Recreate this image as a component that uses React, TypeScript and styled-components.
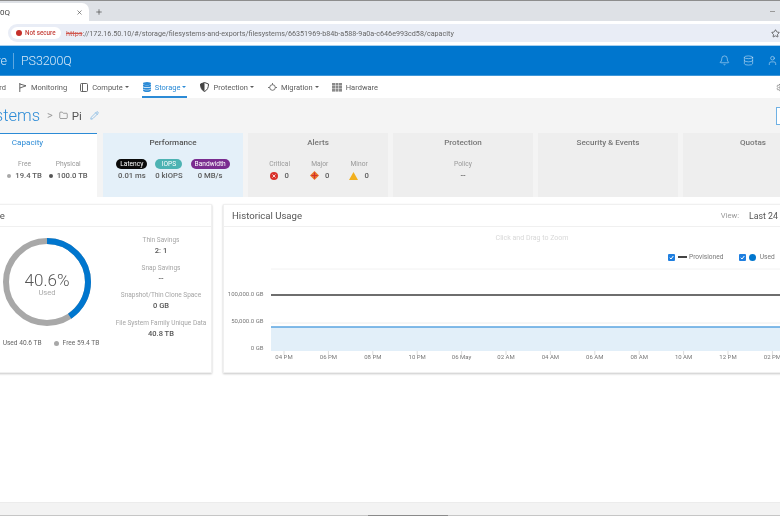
import React from "react";
import styled, { createGlobalStyle } from "styled-components";
import { Bell, Database, Folder, Pencil, Settings, Star, User, X, Plus } from "lucide-react";

const Global = createGlobalStyle`
  html, body { margin: 0; padding: 0; background: #fff; }
  * { box-sizing: border-box; }
`;

const Page = styled.div`
  width: 780px;
  height: 516px;
  overflow: hidden;
  display: flex;
  flex-direction: column;
  font-family: Roboto, "Liberation Sans", sans-serif;
  color: #555;
  background: #fff;
  position: relative;
  filter: blur(0.3px);
`;

const TabStrip = styled.div`
  height: 21px;
  flex: none;
  background: #dee1e6;
  border-top: 1px solid #8d8d8d;
  display: flex;
  align-items: flex-end;
  color: #444;
`;

const Tab = styled.div`
  width: 89px;
  height: 18px;
  background: #fff;
  border-radius: 0 7px 0 0;
  display: flex;
  align-items: center;
  justify-content: space-between;
  padding-right: 6px;
  font-size: 8px;
`;

const NewTab = styled.div`
  width: 20px;
  height: 18px;
  display: flex;
  align-items: center;
  justify-content: center;
`;

const WindowDash = styled.div`
  width: 5px;
  height: 1px;
  background: #999;
  margin: 0 5px 9px auto;
`;

const Toolbar = styled.div`
  height: 25px;
  flex: none;
  background: #fff;
  padding: 3px 0 3px 8px;
  display: flex;
  align-items: flex-start;
  border-bottom: 1px solid #a9d0ee;
`;

const AddressBar = styled.div`
  width: 772px;
  height: 18px;
  background: #e9edf6;
  border-radius: 9px 0 0 9px;
  padding-left: 3px;
  display: flex;
  align-items: center;
  white-space: nowrap;
  font-size: 7.2px;
  color: #666;
`;

const SecureChip = styled.div`
  width: 50px;
  height: 12px;
  background: #fff;
  border-radius: 6px;
  display: flex;
  align-items: center;
  gap: 3px;
  padding-left: 5px;
  margin-right: 5px;
  color: #c5403a;
  font-size: 6.3px;
  font-weight: 500;
`;

const WarnDot = styled.span`
  width: 6px;
  height: 6px;
  border-radius: 50%;
  background: #c5302a;
  flex: none;
`;

const Https = styled.span`
  color: #d0584f;
  text-decoration: line-through;
`;

const StarSlot = styled.span`
  margin-left: auto;
  display: flex;
  color: #444;
`;

const Brand = styled.header`
  height: 30px;
  flex: none;
  background: #0076ce;
  display: flex;
  align-items: center;
  color: #d7e9f7;
  border-bottom: 1px solid #3f97d9;
`;

const BrandName = styled.div`
  font-size: 12.5px;
  font-weight: 300;
  width: 13px;
  text-align: right;
  padding-right: 6px;
  white-space: nowrap;
  direction: rtl;
`;

const ModelName = styled.div`
  border-left: 1px solid #5ea8e0;
  padding-left: 7px;
  height: 16px;
  line-height: 16px;
  font-size: 12.5px;
  font-weight: 300;
  letter-spacing: -0.1px;
`;

const BrandIcons = styled.div`
  margin-left: auto;
  display: flex;
  gap: 13px;
  margin-right: 2px;
`;

const NavBar = styled.nav`
  height: 22px;
  flex: none;
  background: #fff;
  display: flex;
  align-items: stretch;
  font-size: 7.5px;
  color: #5c5c5c;
`;

const NavItem = styled.div<{ $active?: boolean; $gap: number }>`
  display: flex;
  align-items: center;
  gap: 4px;
  margin-right: ${(p) => p.$gap}px;
  color: ${(p) => (p.$active ? "#2c8bd6" : "#5c5c5c")};
  border-bottom: 2px solid ${(p) => (p.$active ? "#2c8bd6" : "transparent")};
  padding: 2px 1px 0;
  white-space: nowrap;
`;

const NavLeadin = styled.div`
  width: 6px;
  direction: rtl;
  overflow: hidden;
  margin-right: 12px;
  display: flex;
  align-items: center;
  white-space: nowrap;
`;

const Caret = styled.span`
  width: 0;
  height: 0;
  border-left: 2px solid transparent;
  border-right: 2px solid transparent;
  border-top: 2.5px solid currentColor;
  margin-left: -2px;
`;

const NavEnd = styled.div`
  margin-left: auto;
  display: flex;
  align-items: center;
  margin-right: -5px;
  color: #777;
`;

const Content = styled.main`
  flex: 1;
  min-height: 0;
  background: linear-gradient(#f4f4f4 0, #f4f4f4 99px, #fff 99px);
`;

const TitleRow = styled.div`
  height: 35px;
  display: flex;
  align-items: center;
  margin-left: -58px;
  color: #555;
  position: relative;
`;

const Crumb = styled.div`
  font-size: 16.5px;
  font-weight: 300;
  color: #2c8bd6;
  width: 98px;
  text-align: right;
  white-space: nowrap;
`;

const Chevron = styled.span`
  font-size: 11px;
  color: #999;
  margin: 0 6px 0 7px;
`;

const CurrentName = styled.span`
  font-size: 11.5px;
  margin: 0 8px 0 4px;
`;

const CornerButton = styled.div`
  position: absolute;
  left: 834px;
  top: 9px;
  width: 30px;
  height: 18px;
  background: #fff;
  border: 1px solid #6fb1e4;
`;

const TileRow = styled.div`
  display: flex;
  gap: 5px;
  margin-left: -42px;
  height: 64px;
`;

const Tile = styled.section<{ $tone?: "active" | "info" }>`
  width: ${(p) => (p.$tone === "active" ? 139 : 140)}px;
  flex: none;
  margin-right: ${(p) => (p.$tone === "active" ? 1 : 0)}px;
  background: ${(p) => (p.$tone === "active" ? "#fff" : p.$tone === "info" ? "#e4f0f9" : "#eee")};
  border-top: 1px solid ${(p) => (p.$tone === "active" ? "#2c8bd6" : "transparent")};
  display: flex;
  flex-direction: column;
  align-items: center;
`;

const TileTitle = styled.div<{ $active?: boolean; $muted?: boolean }>`
  font-size: 8.1px;
  line-height: 10px;
  margin: 3px 0 12px;
  color: ${(p) => (p.$active ? "#2c8bd6" : p.$muted ? "#777" : "#555")};
  font-weight: ${(p) => (p.$active ? 400 : 500)};
`;

const Metrics = styled.div<{ $gap: number; $shift?: number }>`
  display: flex;
  gap: ${(p) => p.$gap}px;
  margin-left: ${(p) => p.$shift ?? 0}px;
`;

const Metric = styled.div`
  display: flex;
  flex-direction: column;
  align-items: center;
  gap: 1px;
  font-size: 7.7px;
  color: #555;
  white-space: nowrap;
`;

const MetricLabel = styled.div`
  font-size: 6.7px;
  line-height: 10px;
  height: 10px;
  color: #999;
`;

const MetricValue = styled.div<{ $gap?: number }>`
  display: flex;
  align-items: center;
  gap: ${(p) => p.$gap ?? 4}px;
  line-height: 11px;
  font-weight: 500;
  color: #5c5c5c;
`;

const Dot = styled.span<{ $color: string; $size?: number }>`
  width: ${(p) => p.$size ?? 4}px;
  height: ${(p) => p.$size ?? 4}px;
  border-radius: 50%;
  background: ${(p) => p.$color};
  flex: none;
`;

const Pill = styled.div<{ $color: string; $width: number }>`
  width: ${(p) => p.$width}px;
  height: 10px;
  line-height: 10px;
  border-radius: 5px;
  background: ${(p) => p.$color};
  color: #fff;
  font-size: 6.6px;
  text-align: center;
`;

const PanelRow = styled.div`
  display: flex;
  gap: 11px;
  margin: 7px 0 0 -43px;
`;

const Panel = styled.section<{ $width: number }>`
  width: ${(p) => p.$width}px;
  height: 169px;
  flex: none;
  background: #fff;
  border: 1px solid #f0f0f0;
  box-shadow: 0 1px 2px rgba(0, 0, 0, 0.22);
  display: flex;
  flex-direction: column;
`;

const PanelHead = styled.div<{ $inset?: number }>`
  height: 22px;
  flex: none;
  border-bottom: 1px solid #f0f0f0;
  display: flex;
  align-items: center;
  padding: 0 8px 0 ${(p) => p.$inset ?? 8}px;
  font-size: 9.6px;
  color: #555;
`;

const ViewLabel = styled.span`
  margin-left: auto;
  font-size: 7.6px;
  color: #999;
`;

const ViewValue = styled.span`
  margin-left: 10px;
  width: 85px;
  font-size: 8.8px;
  color: #555;
  white-space: nowrap;
`;

const UsageBody = styled.div`
  display: flex;
  flex: 1;
`;

const DonutCol = styled.div`
  width: 153px;
  padding: 10px 0 0 25px;
  display: flex;
  flex-direction: column;
  align-items: center;
  flex: none;
`;

const DonutWrap = styled.div`
  width: 90px;
  height: 90px;
  position: relative;
`;

const DonutCenter = styled.div`
  position: absolute;
  inset: 0;
  padding-top: 4px;
  display: flex;
  flex-direction: column;
  align-items: center;
  justify-content: center;
`;

const Percent = styled.div`
  font-size: 17px;
  line-height: 17px;
  font-weight: 300;
  color: #555;
`;

const UsedTag = styled.div`
  font-size: 7.6px;
  line-height: 8px;
  color: #aaa;
`;

const Legend = styled.div`
  display: flex;
  align-items: center;
  gap: 4px;
  margin-top: 12px;
  font-size: 6.6px;
  color: #666;
  white-space: nowrap;
`;

const StatsCol = styled.div`
  width: 100px;
  flex: none;
  padding-top: 8px;
  display: flex;
  flex-direction: column;
  gap: 6px;
  align-items: center;
`;

const Stat = styled.div`
  display: flex;
  flex-direction: column;
  align-items: center;
  white-space: nowrap;
  height: 21.5px;
`;

const StatLabel = styled.div`
  font-size: 6.5px;
  line-height: 10px;
  color: #a5a5a5;
`;

const StatValue = styled.div`
  font-size: 7.5px;
  line-height: 12px;
  font-weight: 500;
  color: #555;
`;

const ZoomHint = styled.div`
  height: 21px;
  width: 616px;
  text-align: center;
  line-height: 22px;
  font-size: 7px;
  color: #d8d8d8;
`;

const ChartLegend = styled.div`
  height: 18px;
  display: flex;
  align-items: center;
  padding-left: 444px;
  font-size: 6.6px;
  color: #777;
  white-space: nowrap;
`;

const CheckBox = styled.span`
  width: 7px;
  height: 7px;
  border-radius: 1px;
  background: #1f7fe0;
  color: #fff;
  display: flex;
  align-items: center;
  justify-content: center;
  margin-right: 3px;
  flex: none;
`;

const LegendDash = styled.span`
  width: 9px;
  height: 1.5px;
  background: #444;
  margin-right: 2px;
`;

const LegendGap = styled.span<{ $width: number }>`
  width: ${(p) => p.$width}px;
`;

const AxisText = styled.text`
  font-size: 6px;
  fill: #777;
  font-family: Roboto, "Liberation Sans", sans-serif;
`;

const BottomBar = styled.div`
  position: absolute;
  left: 0;
  right: 0;
  bottom: 0;
  height: 14px;
  background: #f3f3f3;
  border-top: 1px solid #ececec;
  border-bottom: 1px solid #c6c6c6;
`;

const ScrollThumb = styled.div`
  position: absolute;
  left: 368px;
  bottom: -1px;
  width: 80px;
  height: 1px;
  background: #8a8a8a;
`;

const xLabels = ["04 PM", "06 PM", "08 PM", "10 PM", "06 May", "02 AM", "04 AM", "06 AM", "08 AM", "10 AM", "12 PM", "02 PM"];

function Pennant() {
  return (
    <svg width="8" height="9" viewBox="0 0 8 9" fill="none" stroke="#555" strokeWidth=".9">
      <path d="M.8 0v9M.8 1 7 2.800.8 5" />
    </svg>
  );
}

function ComputeIcon() {
  return (
    <svg width="8" height="9" viewBox="0 0 8 9" fill="none" stroke="#555" strokeWidth=".9">
      <rect x=".5" y=".5" width="7" height="8" rx="1" />
      <path d="M2.500 .5v8" />
    </svg>
  );
}

function StorageIcon() {
  return (
    <svg width="8" height="10" viewBox="0 0 8 10" fill="#2c8bd6">
      <ellipse cx="4" cy="1.500" rx="4" ry="1.500" />
      <path d="M0 2.600c1 1 7 1 8 0v1.700c-1 1.300-7 1.300-8 0zM0 5.200c1 1 7 1 8 0v1.600c-1 1.300-7 1.300-8 0zM0 7.600c1 1 7 1 8 0v.9C7 10.500 1 10.500 0 8.500z" />
    </svg>
  );
}

function ShieldHalf() {
  return (
    <svg width="9" height="10" viewBox="0 0 9 10">
      <path d="M4.500 .5 8.500 2c0 3.500-1 6-4 7.500C1.500 8 .5 5.500 .5 2z" fill="#fff" stroke="#444" />
      <path d="M4.500 .5 .5 2c0 3.500 1 6 4 7.500z" fill="#444" />
    </svg>
  );
}

function MigrationIcon() {
  return (
    <svg width="9" height="9" viewBox="0 0 9 9" fill="none" stroke="#666" strokeWidth=".9">
      <circle cx="4.500" cy="4.500" r="2.800" />
      <path d="M0 4.500h1.700M7.300 4.500H9M4.500 0v1.700" />
    </svg>
  );
}

function HardwareGrid() {
  return (
    <svg width="10" height="9" viewBox="0 0 10 9" fill="#8a8a8a">
      {[0, 3.5, 7].map((x) =>
        [0, 3, 6].map((y) => <rect key={`${x}-${y}`} x={x} y={y} width="3" height="2.600" />)
      )}
    </svg>
  );
}

function CriticalIcon() {
  return (
    <svg width="8" height="8" viewBox="0 0 8 8">
      <circle cx="4" cy="4" r="4" fill="#d9312b" />
      <path d="M2.500 2.500l3 3M5.500 2.500l-3 3" stroke="#fff" strokeWidth=".8" />
    </svg>
  );
}

function MajorIcon() {
  return (
    <svg width="9" height="9" viewBox="0 0 9 9">
      <path d="M4.500 0 9 4.500 4.500 9 0 4.500z" fill="#e8782a" />
      <path d="M4.500 1.500v6M1.500 4.500h6" stroke="#d42f2f" strokeWidth="1.200" />
    </svg>
  );
}

function MinorIcon() {
  return (
    <svg width="9" height="8" viewBox="0 0 9 8">
      <path d="M4.500 0 9 8H0z" fill="#f2b01e" />
    </svg>
  );
}

function Check() {
  return (
    <svg width="5" height="5" viewBox="0 0 5 5" fill="none" stroke="#fff" strokeWidth="1">
      <path d="M.8 2.700 2 4 4.300 1" />
    </svg>
  );
}

function Donut() {
  const r = 41;
  const c = 2 * Math.PI * r;
  return (
    <svg width="90" height="90" viewBox="0 0 90 90" fill="none">
      <circle cx="45" cy="45" r={r} stroke="#a8a8a8" strokeWidth="6" />
      <circle
        cx="45"
        cy="45"
        r={r}
        stroke="#0076ce"
        strokeWidth="6"
        strokeDasharray={`${c * 0.406} ${c}`}
        transform="rotate(-90 45 45)"
      />
    </svg>
  );
}

function UsageChart() {
  return (
    <svg width="600" height="102" viewBox="0 0 600 102">
      <line x1="47" x2="600" y1="3" y2="3" stroke="#f2f2f2" />
      <line x1="47" x2="600" y1="57" y2="57" stroke="#eee" />
      <rect x="47" y="61" width="553" height="24" fill="#e2eff9" />
      <line x1="47" x2="600" y1="61" y2="61" stroke="#5aa5e0" strokeWidth="1.500" />
      <line x1="47" x2="600" y1="29" y2="29" stroke="#6e6e6e" strokeWidth="1.800" />
      <AxisText x="39.500" y="29.500" textAnchor="end">100,000.0 GB</AxisText>
      <AxisText x="39.500" y="56.500" textAnchor="end">50,000.0 GB</AxisText>
      <AxisText x="39.500" y="83.500" textAnchor="end">0 GB</AxisText>
      {xLabels.map((label, i) => {
        const x = 60 + i * 44.4;
        return (
          <g key={label}>
            <line x1={x} x2={x} y1="85" y2="89" stroke="#ddd" />
            <AxisText x={x} y="93" textAnchor="middle">{label}</AxisText>
          </g>
        );
      })}
    </svg>
  );
}

export default function App() {
  return (
    <Page>
      <Global />
      <TabStrip>
        <Tab>
          <span>0Q</span>
          <X size={7} strokeWidth={2} />
        </Tab>
        <NewTab>
          <Plus size={8} strokeWidth={2} />
        </NewTab>
        <WindowDash />
      </TabStrip>
      <Toolbar>
        <AddressBar>
          <SecureChip>
            <WarnDot />
            Not secure
          </SecureChip>
          <Https>https</Https>
          ://172.16.50.10/#/storage/filesystems-and-exports/filesystems/66351969-b84b-a588-9a0a-c646e993cd58/capacity
          <StarSlot>
            <Star size={9} />
          </StarSlot>
        </AddressBar>
      </Toolbar>
      <Brand>
        <BrandName>re</BrandName>
        <ModelName>PS3200Q</ModelName>
        <BrandIcons>
          <Bell size={11} strokeWidth={1.2} />
          <Database size={11} strokeWidth={1.2} />
          <User size={11} strokeWidth={1.2} />
        </BrandIcons>
      </Brand>
      <NavBar>
        <NavLeadin>rd</NavLeadin>
        <NavItem $gap={11}>
          <Pennant />
          Monitoring
        </NavItem>
        <NavItem $gap={12}>
          <ComputeIcon />
          Compute
          <Caret />
        </NavItem>
        <NavItem $active $gap={12}>
          <StorageIcon />
          Storage
          <Caret />
        </NavItem>
        <NavItem $gap={12}>
          <ShieldHalf />
          Protection
          <Caret />
        </NavItem>
        <NavItem $gap={11}>
          <MigrationIcon />
          Migration
          <Caret />
        </NavItem>
        <NavItem $gap={0}>
          <HardwareGrid />
          Hardware
        </NavItem>
        <NavEnd>
          <Settings size={9} />
        </NavEnd>
      </NavBar>
      <Content>
        <TitleRow>
          <Crumb>File Systems</Crumb>
          <Chevron>&gt;</Chevron>
          <Folder size={9} strokeWidth={1.4} />
          <CurrentName>Pi</CurrentName>
          <Pencil size={9} strokeWidth={1.2} color="#2c8bd6" />
          <CornerButton />
        </TitleRow>
        <TileRow>
          <Tile $tone="active">
            <TileTitle $active>Capacity</TileTitle>
            <Metrics $gap={7} $shift={40}>
              <Metric>
                <MetricLabel>Free</MetricLabel>
                <MetricValue>
                  <Dot $color="#a8a8a8" />
                  19.4 TB
                </MetricValue>
              </Metric>
              <Metric>
                <MetricLabel>Physical</MetricLabel>
                <MetricValue>
                  <Dot $color="#555" />
                  100.0 TB
                </MetricValue>
              </Metric>
            </Metrics>
          </Tile>
          <Tile $tone="info">
            <TileTitle>Performance</TileTitle>
            <Metrics $gap={8}>
              <Metric>
                <Pill $color="#0a0a0a" $width={31}>Latency</Pill>
                <MetricValue>0.01 ms</MetricValue>
              </Metric>
              <Metric>
                <Pill $color="#4db3b3" $width={27}>IOPS</Pill>
                <MetricValue>0 kIOPS</MetricValue>
              </Metric>
              <Metric>
                <Pill $color="#7a2c8f" $width={39}>Bandwidth</Pill>
                <MetricValue>0 MB/s</MetricValue>
              </Metric>
            </Metrics>
          </Tile>
          <Tile>
            <TileTitle $muted>Alerts</TileTitle>
            <Metrics $gap={20} $shift={2}>
              <Metric>
                <MetricLabel>Critical</MetricLabel>
                <MetricValue $gap={6}>
                  <CriticalIcon />0
                </MetricValue>
              </Metric>
              <Metric>
                <MetricLabel>Major</MetricLabel>
                <MetricValue $gap={6}>
                  <MajorIcon />0
                </MetricValue>
              </Metric>
              <Metric>
                <MetricLabel>Minor</MetricLabel>
                <MetricValue $gap={6}>
                  <MinorIcon />0
                </MetricValue>
              </Metric>
            </Metrics>
          </Tile>
          <Tile>
            <TileTitle $muted>Protection</TileTitle>
            <Metric>
              <MetricLabel>Policy</MetricLabel>
              <MetricValue>--</MetricValue>
            </Metric>
          </Tile>
          <Tile>
            <TileTitle $muted>Security &amp; Events</TileTitle>
          </Tile>
          <Tile>
            <TileTitle $muted>Quotas</TileTitle>
          </Tile>
        </TileRow>
        <PanelRow>
          <Panel $width={255}>
            <PanelHead $inset={20}>Usage</PanelHead>
            <UsageBody>
              <DonutCol>
                <DonutWrap>
                  <Donut />
                  <DonutCenter>
                    <Percent>40.6%</Percent>
                    <UsedTag>Used</UsedTag>
                  </DonutCenter>
                </DonutWrap>
                <Legend>
                  <Dot $color="#0076ce" />
                  Used 40.6 TB
                  <LegendGap $width={4} />
                  <Dot $color="#a8a8a8" $size={5} />
                  Free 59.4 TB
                </Legend>
              </DonutCol>
              <StatsCol>
                <Stat>
                  <StatLabel>Thin Savings</StatLabel>
                  <StatValue>2: 1</StatValue>
                </Stat>
                <Stat>
                  <StatLabel>Snap Savings</StatLabel>
                  <StatValue>--</StatValue>
                </Stat>
                <Stat>
                  <StatLabel>Snapshot/Thin Clone Space</StatLabel>
                  <StatValue>0 GB</StatValue>
                </Stat>
                <Stat>
                  <StatLabel>File System Family Unique Data</StatLabel>
                  <StatValue>40.8 TB</StatValue>
                </Stat>
              </StatsCol>
            </UsageBody>
          </Panel>
          <Panel $width={620}>
            <PanelHead>
              Historical Usage
              <ViewLabel>View:</ViewLabel>
              <ViewValue>Last 24 hours</ViewValue>
            </PanelHead>
            <ZoomHint>Click and Drag to Zoom</ZoomHint>
            <ChartLegend>
              <CheckBox>
                <Check />
              </CheckBox>
              <LegendDash />
              Provisioned
              <LegendGap $width={16} />
              <CheckBox>
                <Check />
              </CheckBox>
              <Dot $color="#0076ce" $size={7} />
              &nbsp;&nbsp;Used
            </ChartLegend>
            <UsageChart />
          </Panel>
        </PanelRow>
      </Content>
      <BottomBar>
        <ScrollThumb />
      </BottomBar>
    </Page>
  );
}
